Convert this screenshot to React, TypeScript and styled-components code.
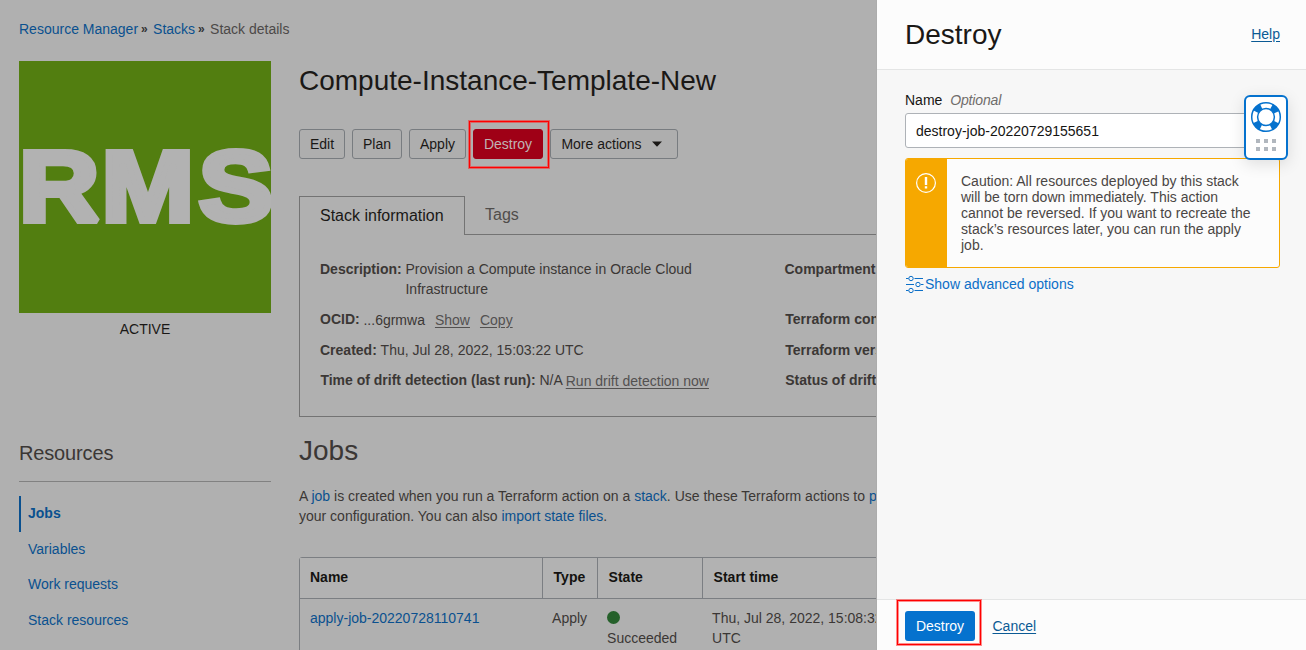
import React from "react";
import styled, { createGlobalStyle } from "styled-components";

const GlobalStyle = createGlobalStyle`
  * { box-sizing: border-box; }
  body { margin: 0; background: #b0b0b0; overflow: hidden; }
  h1, h2, h3, p { margin: 0; font-weight: 400; }
`;

const Screen = styled.div`
  display: flex;
  width: 1306px;
  height: 650px;
  overflow: hidden;
  font: 14px/20px "Liberation Sans", Arial, sans-serif;
  color: #3b3735;
`;

const Page = styled.div`
  width: 877px;
  flex: none;
  overflow: hidden;
  background: #b0b0b0;
  border-right: 1px solid #acacac;
  padding: 19px 0 0 19px;
`;

const Link = styled.a`
  color: #0a508f;
  text-decoration: none;
`;

const Breadcrumbs = styled.nav`
  display: flex;
  height: 20px;
  color: #4c4948;
`;

const Chevron = styled.span`
  width: 15px;
  padding-left: 3px;
  font-size: 12px;
  font-weight: 700;
  color: #333;
`;

const Columns = styled.div`
  display: flex;
  gap: 28px;
  margin-top: 22px;
  width: 1240px;
`;

const Side = styled.aside`
  width: 252px;
  flex: none;
`;

const Tile = styled.div`
  height: 252px;
  background: #527e10;
  svg { display: block; }
`;

const Status = styled.div`
  margin-top: 6px;
  text-align: center;
  color: #1a1816;
`;

const SideTitle = styled.h3`
  margin-top: 99px;
  padding-bottom: 13px;
  height: 44px;
  border-bottom: 1px solid #818181;
  font-size: 20px;
  line-height: 30px;
  letter-spacing: -0.15px;
`;

const SideNav = styled.nav`
  margin-top: 14px;
  display: flex;
  flex-direction: column;
`;

const SideItem = styled.a<{ $active?: boolean; $h: number }>`
  height: ${(p) => p.$h}px;
  padding: 7px 0 0 7px;
  border-left: 2px solid ${(p) => (p.$active ? "#0a508f" : "transparent")};
  color: #0a508f;
  font-weight: ${(p) => (p.$active ? 700 : 400)};
`;

const Main = styled.main`
  flex: 1;
`;

const Title = styled.h1`
  font-size: 28px;
  line-height: 40px;
  color: #1a1816;
`;

const Actions = styled.div`
  display: flex;
  gap: 7px;
  margin-top: 28px;
`;

const Button = styled.button<{ $danger?: boolean; $menu?: boolean; $w: number }>`
  position: relative;
  display: flex;
  align-items: center;
  justify-content: center;
  gap: 10px;
  width: ${(p) => p.$w}px;
  height: 30px;
  padding: 0 ${(p) => (p.$menu ? 5 : 0)}px 0 0;
  border: 1px solid ${(p) => (p.$danger ? "#9f0016" : "#787c80")};
  border-radius: 3px;
  background: ${(p) => (p.$danger ? "#9f0016" : "#aeaeae")};
  color: ${(p) => (p.$danger ? "#c0b3b4" : "#1a1816")};
  font: inherit;
  white-space: nowrap;
`;

const Highlight = styled.span<{ $l: number; $t: number; $w: number; $h: number }>`
  position: absolute;
  left: ${(p) => p.$l}px;
  top: ${(p) => p.$t}px;
  width: ${(p) => p.$w}px;
  height: ${(p) => p.$h}px;
  border: 1px solid #ff0000;
  box-shadow: 0 0 0 1px rgba(255, 30, 30, 0.5), inset 0 0 0 1px rgba(255, 30, 30, 0.5);
  z-index: 1;
`;

const Tabs = styled.div`
  display: flex;
  height: 39px;
  margin-top: 37px;
  font-size: 16px;
`;

const Tab = styled.div<{ $active?: boolean }>`
  padding: ${(p) => (p.$active ? "9px 20px" : "9px 0 0 20px")};
  flex: ${(p) => (p.$active ? "none" : 1)};
  width: ${(p) => (p.$active ? "166px" : "auto")};
  border: solid #737373;
  border-width: ${(p) => (p.$active ? "1px 1px 0 1px" : "0 0 1px 0")};
  color: ${(p) => (p.$active ? "#1a1816" : "#504d4b")};
  white-space: nowrap;
`;

const Panel = styled.section`
  display: flex;
  height: 182px;
  padding: 24px 0 0 20px;
  border: solid #737373;
  border-width: 0 1px 1px;
`;

const Facts = styled.div<{ $w: number }>`
  width: ${(p) => p.$w}px;
  flex: none;
  display: flex;
  flex-direction: column;
`;

const Fact = styled.div<{ $h: number; $inset?: number }>`
  display: flex;
  height: ${(p) => p.$h}px;
  padding-left: ${(p) => p.$inset || 0}px;
  white-space: nowrap;
`;

const Label = styled.b`
  margin-right: 3.8px;
`;

const Value = styled.span<{ $drop?: boolean }>`
  padding-top: ${(p) => (p.$drop ? 1 : 0)}px;
`;

const TextAction = styled.a<{ $gap: number }>`
  margin-left: ${(p) => p.$gap}px;
  padding-top: 1px;
  color: #535150;
  text-decoration: underline;
  text-underline-offset: 2px;
`;

const SectionTitle = styled.h2`
  margin-top: 14px;
  font-size: 28px;
  line-height: 40px;
`;

const Intro = styled.p`
  margin-top: 15px;
  white-space: nowrap;
`;

const Table = styled.div`
  margin-top: 31px;
  height: 120px;
  border: 1px solid #7b7e82;
  border-radius: 3px 3px 0 0;
  background: #b2b2b2;
`;

const Row = styled.div<{ $head?: boolean }>`
  display: grid;
  grid-template-columns: 243px 55px 105px 200px 1fr;
  height: ${(p) => (p.$head ? "41px" : "80px")};
  border-bottom: 1px solid #7b7e82;
  background: ${(p) => (p.$head ? "#b2b2b2" : "#b0b0b0")};
`;

const HeadCell = styled.div`
  padding: 9px 0 0 10.6px;
  border-right: 1px solid #7b7e82;
  color: #141210;
  font-weight: 700;
  &:first-child { padding-left: 10px; }
`;

const Cell = styled.div<{ $first?: boolean }>`
  padding: 9px 0 0 ${(p) => (p.$first ? 10 : 9.1)}px;
`;

const Dot = styled.span`
  display: block;
  width: 13px;
  height: 13px;
  margin: 3px 0 4px;
  border-radius: 50%;
  background: #25602a;
`;

const Drawer = styled.aside`
  width: 429px;
  display: flex;
  flex-direction: column;
  background: #f7f7f7;
`;

const DrawerHead = styled.header`
  display: flex;
  justify-content: space-between;
  height: 70px;
  padding: 15px 26px 0 28px;
  border-bottom: 1px solid #e4e5e5;
  background: #fcfcfc;
`;

const Underlined = styled.a<{ $top?: number }>`
  padding-top: ${(p) => p.$top || 0}px;
  color: #0b5a94;
  text-decoration: underline;
  text-underline-offset: 2px;
`;

const DrawerBody = styled.div`
  position: relative;
  flex: 1;
  padding: 20px 26px 0 28px;
`;

const FieldLabel = styled.label`
  display: block;
  height: 23px;
  color: #161513;
  i { margin-left: 4px; color: #706d6b; letter-spacing: -0.15px; }
`;

const Input = styled.input`
  display: block;
  width: 375px;
  height: 35px;
  padding: 0 10px;
  border: 1px solid #aeb2b7;
  border-radius: 3px;
  background: #fff;
  color: #161513;
  font: inherit;
`;

const Caution = styled.div`
  display: flex;
  width: 375px;
  height: 110px;
  margin-top: 10px;
  border: 1px solid #f6a800;
  border-radius: 3px;
  background: #fcfcfc;
  overflow: hidden;
`;

const CautionMark = styled.div`
  width: 41px;
  flex: none;
  padding: 14px 0 0 10px;
  background: #f6a800;
`;

const CautionText = styled.p`
  padding: 14px 20px 0 14px;
  line-height: 16px;
  color: #4a4644;
`;

const Advanced = styled.a`
  display: flex;
  align-items: center;
  height: 20px;
  margin-top: 6px;
  color: #0b6fc8;
`;

const HelpWidget = styled.div`
  position: absolute;
  left: 367px;
  top: 25px;
  width: 44px;
  height: 65px;
  border: 2px solid #0572ce;
  border-radius: 6px;
  background: #fff;
  box-shadow: 0 4px 16px rgba(0, 0, 0, 0.12);
  svg { display: block; }
`;

const DrawerFoot = styled.footer`
  display: flex;
  height: 51px;
  padding: 11px 0 0 28px;
  gap: 17.5px;
  border-top: 1px solid #e4e5e5;
  background: #fcfcfc;
`;

const Submit = styled.button`
  position: relative;
  width: 70px;
  height: 30px;
  padding: 0;
  border: 0;
  border-radius: 3px;
  background: #0572ce;
  color: #fff;
  font: inherit;
`;

export default function App() {
  return (
    <Screen>
      <GlobalStyle />
      <Page>
        <Breadcrumbs>
          <Link>Resource Manager</Link>
          <Chevron>»</Chevron>
          <Link>Stacks</Link>
          <Chevron>»</Chevron>
          <span>Stack details</span>
        </Breadcrumbs>
        <Columns>
          <Side>
            <Tile>
              <svg width="252" height="252">
                <text
                  transform="scale(1.1 1)"
                  x="0 75 163.3"
                  y="160"
                  fontFamily="'Liberation Sans', Arial, sans-serif"
                  fontWeight="700"
                  fontSize="101"
                  fill="#b2b2b2"
                  stroke="#b2b2b2"
                  strokeWidth="6"
                  strokeMiterlimit="1.5"
                >
                  RMS
                </text>
              </svg>
            </Tile>
            <Status>ACTIVE</Status>
            <SideTitle>Resources</SideTitle>
            <SideNav>
              <SideItem $h={36} $active>Jobs</SideItem>
              <SideItem $h={35}>Variables</SideItem>
              <SideItem $h={36}>Work requests</SideItem>
              <SideItem $h={36}>Stack resources</SideItem>
            </SideNav>
          </Side>
          <Main>
            <Title>Compute-Instance-Template-New</Title>
            <Actions>
              <Button $w={46}>Edit</Button>
              <Button $w={50}>Plan</Button>
              <Button $w={57}>Apply</Button>
              <Button $w={70} $danger>
                Destroy
                <Highlight $l={-5} $t={-9} $w={80} $h={47} />
              </Button>
              <Button $w={128} $menu>
                More actions
                <svg width="10" height="6">
                  <path d="M0 0.5h10L5 5.8z" fill="#1a1816" />
                </svg>
              </Button>
            </Actions>
            <Tabs>
              <Tab $active>Stack information</Tab>
              <Tab>Tags</Tab>
            </Tabs>
            <Panel>
              <Facts $w={464.5}>
                <Fact $h={50}>
                  <Label>Description:</Label>
                  <Value>
                    Provision a Compute instance in Oracle Cloud
                    <br />
                    Infrastructure
                  </Value>
                </Fact>
                <Fact $h={31}>
                  <Label>OCID:</Label>
                  <Value $drop>...6grmwa</Value>
                  <TextAction $gap={10}>Show</TextAction>
                  <TextAction $gap={10}>Copy</TextAction>
                </Fact>
                <Fact $h={30}>
                  <Label>Created:</Label>
                  <Value>Thu, Jul 28, 2022, 15:03:22 UTC</Value>
                </Fact>
                <Fact $h={30} $inset={0.4}>
                  <Label>Time of drift detection (last run):</Label>
                  <Value>N/A</Value>
                  <TextAction $gap={3}>Run drift detection now</TextAction>
                </Fact>
              </Facts>
              <Facts $w={400}>
                <Fact $h={50}><Label>Compartment:</Label></Fact>
                <Fact $h={31} $inset={0.7}><Label>Terraform configuration:</Label></Fact>
                <Fact $h={30} $inset={0.7}><Label>Terraform version:</Label></Fact>
                <Fact $h={30} $inset={0.7}><Label>Status of drift detection:</Label></Fact>
              </Facts>
            </Panel>
            <SectionTitle>Jobs</SectionTitle>
            <Intro>
              A <Link>job</Link> is created when you run a Terraform action on a <Link>stack</Link>. Use these
              Terraform actions to <Link>provision</Link>
              <br />
              your configuration. You can also <Link>import state files</Link>.
            </Intro>
            <Table>
              <Row $head>
                <HeadCell>Name</HeadCell>
                <HeadCell>Type</HeadCell>
                <HeadCell>State</HeadCell>
                <HeadCell>Start time</HeadCell>
              </Row>
              <Row>
                <Cell $first><Link>apply-job-20220728110741</Link></Cell>
                <Cell>Apply</Cell>
                <Cell><Dot />Succeeded</Cell>
                <Cell>Thu, Jul 28, 2022, 15:08:32<br />UTC</Cell>
              </Row>
            </Table>
          </Main>
        </Columns>
      </Page>
      <Drawer>
        <DrawerHead>
          <Title>Destroy</Title>
          <Underlined $top={9}>Help</Underlined>
        </DrawerHead>
        <DrawerBody>
          <FieldLabel>
            Name <i>Optional</i>
          </FieldLabel>
          <Input defaultValue="destroy-job-20220729155651" />
          <Caution>
            <CautionMark>
              <svg width="21" height="21" fill="none" stroke="#fff">
                <circle cx="10" cy="10" r="9.4" strokeWidth="1.2" />
                <path d="M10 4v8M10 13.3v2.2" strokeWidth="2.4" />
              </svg>
            </CautionMark>
            <CautionText>
              Caution: All resources deployed by this stack will be torn down immediately. This action cannot be
              reversed. If you want to recreate the stack’s resources later, you can run the apply job.
            </CautionText>
          </Caution>
          <Advanced>
            <svg width="20" height="20" fill="none" stroke="#0b6fc8">
              <path d="M1 4.5h2.5M9.5 4.5h8.5M1 10.5h8M16 10.5h2.5M1 16.5h2.5M9.5 16.5h8.5" />
              <circle cx="6" cy="4.5" r="2.2" />
              <circle cx="13" cy="10.5" r="2.2" />
              <circle cx="6" cy="16.5" r="2.2" />
            </svg>
            Show advanced options
          </Advanced>
          <HelpWidget>
            <svg width="40" height="61">
              <g fill="none" stroke="#0572ce">
                <circle cx="20" cy="20" r="14.3" strokeWidth="1.5" />
                <circle cx="20" cy="20" r="8.4" strokeWidth="1.5" />
                <circle
                  cx="20"
                  cy="20"
                  r="11.5"
                  strokeWidth="6"
                  strokeDasharray="7.6 10.464"
                  transform="rotate(26.1 20 20)"
                />
              </g>
              <path
                d="M10 42h4v4h-4zM18 42h4v4h-4zM26 42h4v4h-4zM10 50h4v4h-4zM18 50h4v4h-4zM26 50h4v4h-4z"
                fill="#b1b7be"
              />
            </svg>
          </HelpWidget>
        </DrawerBody>
        <DrawerFoot>
          <Submit>
            Destroy
            <Highlight $l={-8} $t={-11} $w={84} $h={45} />
          </Submit>
          <Underlined $top={5}>Cancel</Underlined>
        </DrawerFoot>
      </Drawer>
    </Screen>
  );
}
